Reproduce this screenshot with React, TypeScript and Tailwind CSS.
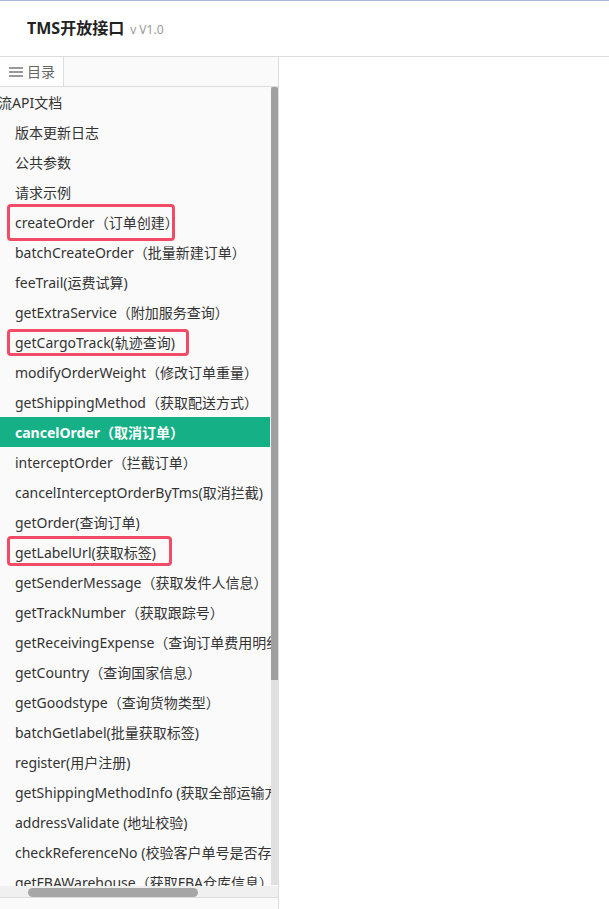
import React from "react";

type Item = { text: string; box?: { w: number; top: number; h: number }; active?: boolean };

const items: Item[] = [
  { text: "版本更新日志" },
  { text: "公共参数" },
  { text: "请求示例" },
  { text: "createOrder（订单创建）", box: { w: 168, top: -3, h: 37 } },
  { text: "batchCreateOrder（批量新建订单）" },
  { text: "feeTrail(运费试算)" },
  { text: "getExtraService（附加服务查询）" },
  { text: "getCargoTrack(轨迹查询)", box: { w: 182, top: 2, h: 27 } },
  { text: "modifyOrderWeight（修改订单重量）" },
  { text: "getShippingMethod（获取配送方式）" },
  { text: "cancelOrder（取消订单）", active: true },
  { text: "interceptOrder（拦截订单）" },
  { text: "cancelInterceptOrderByTms(取消拦截)" },
  { text: "getOrder(查询订单)" },
  { text: "getLabelUrl(获取标签)", box: { w: 165, top: -1, h: 30 } },
  { text: "getSenderMessage（获取发件人信息）" },
  { text: "getTrackNumber（获取跟踪号）" },
  { text: "getReceivingExpense（查询订单费用明细）" },
  { text: "getCountry（查询国家信息）" },
  { text: "getGoodstype（查询货物类型）" },
  { text: "batchGetlabel(批量获取标签)" },
  { text: "register(用户注册)" },
  { text: "getShippingMethodInfo (获取全部运输方式)" },
  { text: "addressValidate (地址校验)" },
  { text: "checkReferenceNo (校验客户单号是否存在)" },
  { text: "getFBAWarehouse（获取FBA仓库信息）" },
];

export default function App() {
  return (
    <div
      className="w-[609px] h-[909px] bg-white overflow-hidden flex flex-col text-[#333]"
      style={{ fontFamily: '"Noto Sans", "Noto Sans CJK SC", sans-serif' }}
    >
      <div className="h-px bg-[#aab8d6] shrink-0" />
      <div className="h-[56px] shrink-0 border-b border-[#dddddd] flex items-center pl-[27px] pb-[1px]">
        <span className="text-[16px] font-bold text-[#222] leading-none">TMS开放接口</span>
        <span className="text-[12px] text-[#999] ml-[6px] mt-[3px] leading-none">v V1.0</span>
      </div>
      <div className="flex flex-1 min-h-0">
        <div className="w-[279px] shrink-0 border-r border-[#dddddd] bg-[#fafafa] flex flex-col">
          <div className="h-[30px] shrink-0 border-b border-[#dddddd] flex">
            <div className="w-[64px] h-[29px] bg-white border-r border-[#dddddd] flex items-center pl-[9px] gap-[4px] text-[14px] text-[#666]">
              <svg width="14" height="12" viewBox="0 0 14 12">
                <rect x="0" y="1" width="14" height="2" fill="#999" />
                <rect x="0" y="5" width="14" height="2" fill="#999" />
                <rect x="0" y="9" width="14" height="2" fill="#999" />
              </svg>
              <span>目录</span>
            </div>
          </div>
          <div className="relative flex-1 min-h-0 overflow-hidden">
            <div className="pr-[8px]">
              <div className="h-[30px] flex items-center text-[14px] whitespace-nowrap -ml-[2px]">流API文档</div>
              {items.map((it, i) => (
                <div
                  key={i}
                  className={
                    "relative h-[30px] flex items-center pl-[15px] text-[14px] whitespace-nowrap " +
                    (it.active ? "bg-[#16b086] text-white font-bold" : "")
                  }
                >
                  {it.text}
                  {it.box && (
                    <div
                      className="absolute left-[7px] border-[3px] border-[#f24b66] rounded-[4px]"
                      style={{ width: it.box.w, top: it.box.top, height: it.box.h }}
                    />
                  )}
                </div>
              ))}
            </div>
            {/* vertical scrollbar */}
            <div className="absolute right-0 top-0 w-[7px] h-[798px] bg-[#e0e0e0]">
              <div className="w-[7px] h-[593px] bg-[#a0a0a0] rounded-t-[2px]" />
            </div>
            {/* horizontal scrollbar */}
            <div className="absolute left-0 right-0 top-[799px] h-[12px] bg-[#f0f0f0] border-b border-[#dddddd]">
              <div className="absolute left-[28px] top-[2px] w-[170px] h-[9px] bg-[#a6a6a6] rounded-full" />
            </div>
          </div>
        </div>
        <div className="flex-1 bg-white" />
      </div>
    </div>
  );
}
